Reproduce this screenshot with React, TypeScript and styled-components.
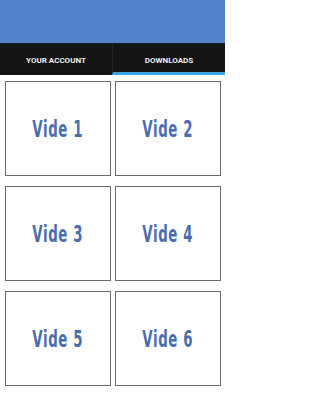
import React, { FC } from 'react'
import styled, { createGlobalStyle } from 'styled-components'

const GlobalStyle = createGlobalStyle`
  html, body {
    margin: 0;
    padding: 0;
    background: #ffffff;
  }
  body {
    font-family: Roboto, 'Liberation Sans', sans-serif;
  }
`

const Page = styled.div`
  width: 225px;
  height: 400px;
  display: flex;
  flex-direction: column;
  background: #ffffff;
  overflow: hidden;
`

const Header = styled.div`
  height: 43px;
  background: #5483cc;
  border-bottom: 2px solid #141a26;
`

const TabBar = styled.div`
  display: flex;
  height: 30px;
  background: #141414;
`

const Tab = styled.div<{ $active?: boolean }>`
  flex: 1;
  display: flex;
  align-items: center;
  justify-content: center;
  color: #eeeeee;
  font-size: 8px;
  font-weight: 700;
  border-bottom: 3px solid ${(p) => (p.$active ? '#3da3e4' : 'transparent')};
  padding-top: 3px;

  & + & {
    border-left: 1px solid #262626;
  }
`

const Grid = styled.div`
  display: grid;
  grid-template-columns: 106px 106px;
  grid-auto-rows: 95px;
  column-gap: 4px;
  row-gap: 10px;
  padding: 6px 0 0 5px;
`

const Card = styled.div`
  box-sizing: border-box;
  border: 1.5px solid #6b6b6b;
  display: flex;
  align-items: center;
  justify-content: center;
`

const Label = styled.span`
  display: inline-block;
  font-family: 'DejaVu Sans', 'Liberation Sans', sans-serif;
  font-weight: 700;
  font-size: 23px;
  letter-spacing: 1px;
  color: #4b6db0;
  transform: scaleX(0.58);
  white-space: nowrap;
`

const videos = [1, 2, 3, 4, 5, 6]

const App: FC = () => (
  <>
    <GlobalStyle />
    <Page>
      <Header />
      <TabBar>
        <Tab>YOUR ACCOUNT</Tab>
        <Tab $active>DOWNLOADS</Tab>
      </TabBar>
      <Grid>
        {videos.map((n) => (
          <Card key={n}>
            <Label>Vide {n}</Label>
          </Card>
        ))}
      </Grid>
    </Page>
  </>
)

export default App
